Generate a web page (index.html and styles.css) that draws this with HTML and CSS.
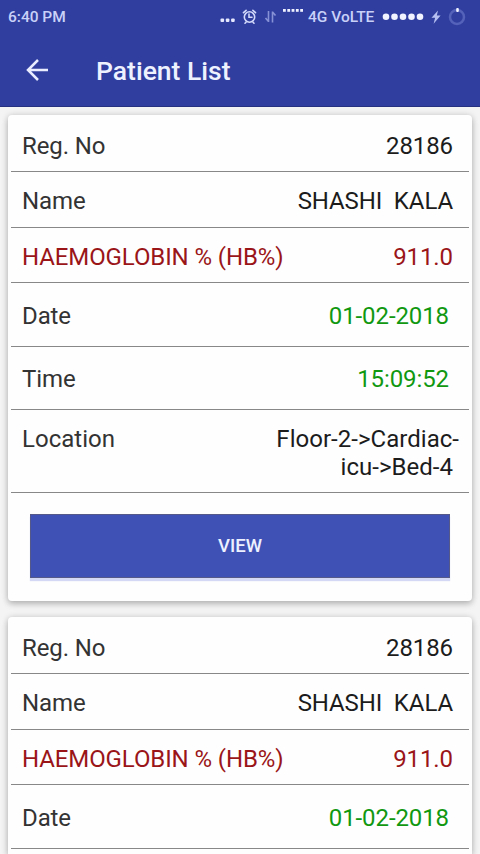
FILE: index.html
```html
<!DOCTYPE html>
<html lang="en">
<head>
<meta charset="utf-8">
<title>Patient List</title>
<link rel="stylesheet" href="styles.css">
</head>
<body>
<header class="header">
  <div class="status">
    <span class="clock">6:40 PM</span>
    <svg class="status-icons" width="90" height="32" viewBox="0 0 90 32">
      <g fill="#e6e8ff">
        <rect x="2.500" y="17.500" width="3.600" height="3.600" rx="1"/><rect x="7.800" y="17.500" width="3.600" height="3.600" rx="1"/><rect x="13.100" y="17.500" width="3.600" height="3.600" rx="1"/>
      </g>
      <g fill="none" stroke="#d3d9fb" stroke-width="1.600" stroke-linecap="round">
        <circle cx="31.500" cy="16" r="5.200"/>
        <path d="M31 13v3.300h3M25.500 11.700l2.600-2.300M37.500 11.700l-2.600-2.300M28 21.200l-1 1M35 21.200l1 1"/>
      </g>
      <g fill="none" stroke="#8791d6" stroke-width="1.600">
        <path d="M50.500 10v11M47.500 17l3 3.500M54.500 21.500v-11M54.500 11l3 3.500"/>
      </g>
      <g fill="#eef0ff">
        <rect x="65" y="8" width="2.800" height="2.800"/><rect x="69.300" y="8" width="2.800" height="2.800"/><rect x="73.600" y="8" width="2.800" height="2.800"/><rect x="77.900" y="8" width="2.800" height="2.800"/><rect x="82.200" y="8" width="2.800" height="2.800"/>
      </g>
    </svg>
    <span class="network">4G VoLTE</span>
    <svg class="status-icons" width="90" height="32" viewBox="0 0 90 32">
      <g fill="#f1f3ff">
        <circle cx="8" cy="15.700" r="3.300"/><circle cx="16.500" cy="15.700" r="3.300"/><circle cx="25" cy="15.700" r="3.300"/><circle cx="33.500" cy="15.700" r="3.300"/><circle cx="42" cy="15.700" r="3.300"/>
      </g>
      <path fill="#b7c0f2" d="M60 9.500l-6.500 7.300h3.600l-1.500 6 7-8.300h-3.800z"/>
      <circle cx="79" cy="16" r="7" fill="none" stroke="#5562b9" stroke-width="2.500"/>
      <rect x="78.200" y="7" width="2.600" height="4" rx="1" fill="#f1f3ff"/>
    </svg>
  </div>
  <div class="toolbar">
    <svg class="back" width="24" height="24" viewBox="0 0 24 24" fill="none" stroke="#e9edff" stroke-width="2.500"><path d="M23 12H3M13 2L3 12l10 10"/></svg>
    <h1 class="title">Patient List</h1>
  </div>
</header>
<main class="list">
  <article class="card">
    <div class="row first"><span>Reg. No</span><span class="value">28186</span></div>
    <div class="row name"><span>Name</span><span class="value">SHASHI&nbsp; KALA</span></div>
    <div class="row alert"><span>HAEMOGLOBIN % (HB%)</span><span class="value">911.0</span></div>
    <div class="row date"><span>Date</span><span class="value">01-02-2018</span></div>
    <div class="row time"><span>Time</span><span class="value">15:09:52</span></div>
    <div class="row location"><span>Location</span><span class="value">Floor-2-&gt;Cardiac-<br>icu-&gt;Bed-4&nbsp;</span></div>
    <button class="view">VIEW</button>
  </article>
  <article class="card partial">
    <div class="row first"><span>Reg. No</span><span class="value">28186</span></div>
    <div class="row name"><span>Name</span><span class="value">SHASHI&nbsp; KALA</span></div>
    <div class="row alert"><span>HAEMOGLOBIN % (HB%)</span><span class="value">911.0</span></div>
    <div class="row date"><span>Date</span><span class="value">01-02-2018</span></div>
  </article>
</main>
</body>
</html>
```
FILE: styles.css
```css
* { box-sizing: border-box; }
body {
  margin: 0;
  height: 854px;
  overflow: hidden;
  display: flex;
  flex-direction: column;
  background: #f4f4f4;
  font-family: Roboto, sans-serif;
}
.header {
  flex: none;
  height: 107px;
  background: #303f9f;
  border-bottom: 1px solid #26327f;
}
.status {
  height: 33px;
  display: flex;
  align-items: center;
  padding-left: 8px;
  color: #c9d1f8;
  font-size: 15.5px;
  font-weight: 500;
}
.clock { width: 210px; }
.status-icons { flex: none; }
.network { width: 70px; white-space: nowrap; }
.toolbar {
  height: 73px;
  display: flex;
  align-items: center;
  padding-left: 25px;
}
.title {
  margin: 2px 0 0 47px;
  font-size: 26.5px;
  font-weight: 500;
  color: #eef2ff;
}
.list {
  flex: 1;
  min-height: 0;
  padding: 8px 8px 0;
  display: flex;
  flex-direction: column;
  gap: 16px;
}
.card {
  flex: none;
  height: 486px;
  padding: 0 3px;
  background: #fefefe;
  border-radius: 4px;
  box-shadow: 0 3px 6px rgba(0, 0, 0, .22), 0 0 7px rgba(0, 0, 0, .13);
}
.partial {
  flex: 1;
  height: auto;
  border-radius: 4px 4px 0 0;
}
.row {
  display: flex;
  justify-content: space-between;
  padding: 15px 16px 0 11px;
  border-bottom: 1px solid #888;
  font-size: 24px;
  line-height: 28px;
  letter-spacing: -.1px;
  color: #333;
  white-space: nowrap;
}
.value { color: #1c1c1c; text-align: right; }
.first { height: 57px; padding-top: 17px; }
.name { height: 56px; }
.alert { height: 55px; color: #9a1518; }
.alert .value { color: #9a1518; }
.date { height: 64px; padding-top: 19px; padding-right: 20px; }
.time { height: 63px; padding-top: 18px; padding-right: 20px; }
.date .value, .time .value { color: #119811; }
.location { height: 83px; padding-right: 10px; letter-spacing: .03px; }
.view {
  display: block;
  width: 420px;
  height: 64px;
  margin: 21px 0 0 19px;
  padding: 0;
  border: 1px solid #54598a;
  background: #4051b5;
  box-shadow: 0 3px 1px #d5d8f4;
  color: #edf1ff;
  font: 500 18.5px Roboto, sans-serif;
}
```
